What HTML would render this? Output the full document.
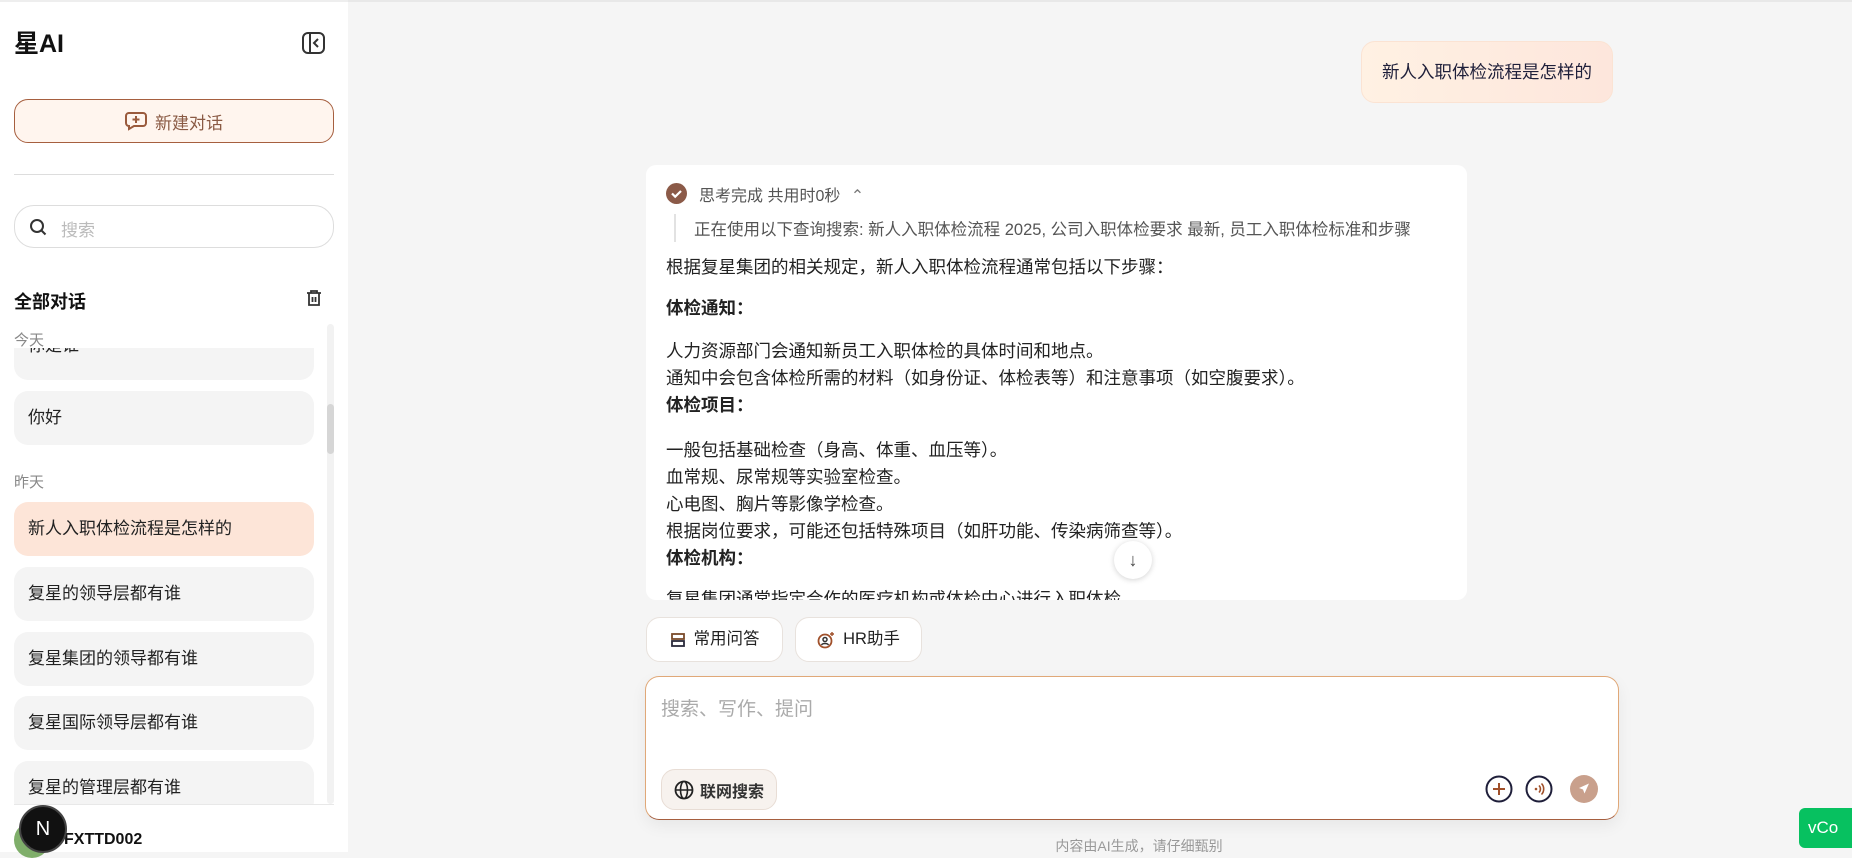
<!DOCTYPE html>
<html><head><meta charset="utf-8"><style>
*{box-sizing:border-box;margin:0;padding:0}
body{width:1852px;height:852px;overflow:hidden;background:#f5f5f5;font-family:"Liberation Sans","Noto Sans CJK SC",sans-serif;color:#1f1f1f;position:relative}
.abs{position:absolute}
#side{left:0;top:0;width:348px;height:852px;background:#fff;border-top:2px solid #eee}
.item{position:absolute;left:14px;width:300px;height:54px;border-radius:14px;background:#f4f4f4;font-size:17px;line-height:54px;padding-left:14px;color:#222}
.body p{font-size:17.5px;line-height:27px;color:#222}
.chip{position:absolute;top:617px;height:45px;background:#fff;border:1px solid #e8e2dd;border-radius:14px;font-size:16.5px;line-height:43px;display:flex;align-items:center;justify-content:center;gap:8px;color:#222}
</style></head><body>
<div class="abs" style="left:0;top:0;width:1852px;height:2px;background:#e8e8e8"></div>
<div id="side" class="abs">
  <div class="abs" style="left:14px;top:22px;font-size:25px;font-weight:bold;color:#111">星AI</div>
  <svg class="abs" style="left:301px;top:29px" width="25" height="24" viewBox="0 0 25 24"><rect x="2" y="2" width="21" height="20" rx="5" fill="none" stroke="#333" stroke-width="2"/><line x1="9" y1="2" x2="9" y2="22" stroke="#333" stroke-width="2"/><path d="M17 8l-4 4 4 4" fill="none" stroke="#333" stroke-width="2"/></svg>
  <div class="abs" style="left:14px;top:97px;width:320px;height:44px;border:1px solid #a65f3f;border-radius:14px;background:#fff5ee;display:flex;align-items:center;justify-content:center;gap:8px;font-size:17px;color:#8a5a44">
    <svg width="22" height="20" viewBox="0 0 22 20"><path d="M4 2h14a3 3 0 013 3v7a3 3 0 01-3 3H9l-5 3v-3a3 3 0 01-3-3V5a3 3 0 013-3z" fill="none" stroke="#9a5a3c" stroke-width="2"/><path d="M11 5v7M7.5 8.5h7" stroke="#9a5a3c" stroke-width="2"/></svg>新建对话</div>
  <div class="abs" style="left:14px;top:172px;width:320px;height:1px;background:#ddd"></div>
  <div class="abs" style="left:14px;top:203px;width:320px;height:43px;border:1px solid #ddd;border-radius:20px">
    <svg class="abs" style="left:14px;top:12px" width="18" height="18" viewBox="0 0 18 18"><circle cx="8" cy="8" r="6" fill="none" stroke="#333" stroke-width="2"/><path d="M12.5 12.5l4 4" stroke="#333" stroke-width="2"/></svg>
    <span class="abs" style="left:46px;top:10px;font-size:17px;color:#bbb">搜索</span></div>
  <div class="abs" style="left:14px;top:286px;font-size:18px;font-weight:bold;color:#111">全部对话</div>
  <svg class="abs" style="left:305px;top:287px" width="18" height="18" viewBox="0 0 18 18"><path d="M2 4h14M6 4V2h6v2M4 4v12h10V4M7.5 8v5M10.5 8v5" fill="none" stroke="#333" stroke-width="1.8"/></svg>
  <div class="abs" style="left:0;top:322px;width:348px;height:480px;overflow:hidden">
    <div class="item" style="top:2px;line-height:40px">你是谁</div>
    <div class="abs" style="left:0;top:0;width:326px;height:24px;background:#fff"></div>
    <div class="abs" style="left:14px;top:5px;font-size:15px;color:#888">今天</div>
    <div class="item" style="top:67px">你好</div>
    <div class="abs" style="left:14px;top:147px;font-size:15px;color:#888">昨天</div>
    <div class="item" style="top:178px;background:#fde5d8">新人入职体检流程是怎样的</div>
    <div class="item" style="top:243px">复星的领导层都有谁</div>
    <div class="item" style="top:308px">复星集团的领导都有谁</div>
    <div class="item" style="top:372px">复星国际领导层都有谁</div>
    <div class="item" style="top:437px">复星的管理层都有谁</div>
    <div class="abs" style="left:327px;top:0;width:7px;height:480px;background:#f2f2f2;border-radius:4px"></div>
    <div class="abs" style="left:327px;top:80px;width:7px;height:50px;background:#d6d6d6;border-radius:4px"></div>
  </div>
  <div class="abs" style="left:14px;top:802px;width:320px;height:1px;background:#e8e8e8"></div>
  <div class="abs" style="left:14px;top:820px;width:36px;height:36px;border-radius:50%;background:#7fae6a"></div>
  <div class="abs" style="left:64px;top:829px;font-size:16px;font-weight:bold;color:#111">FXTTD002</div>
  <div class="abs" style="left:19px;top:803px;width:48px;height:48px;border-radius:50%;background:#111;border:2px solid #444;color:#fff;font-size:20px;text-align:center;line-height:44px">N</div>
</div>

<div class="abs" style="left:1361px;top:41px;width:252px;height:62px;border-radius:14px;background:linear-gradient(90deg,#fff1e3,#fde6dc);border:1px solid #fbe3d3;font-size:17.5px;line-height:60px;text-align:center;color:#1f1f3a">新人入职体检流程是怎样的</div>

<div class="abs" style="left:646px;top:165px;width:821px;height:435px;background:#fff;border-radius:10px;overflow:hidden">
  <svg class="abs" style="left:20px;top:18px" width="21" height="21" viewBox="0 0 21 21"><circle cx="10.5" cy="10.5" r="10.5" fill="#8b5a48"/><path d="M6 10.5l3.2 3.2L15 8" fill="none" stroke="#fff" stroke-width="2.2"/></svg>
  <div class="abs" style="left:53px;top:17px;font-size:16px;color:#555">思考完成 共用时0秒 <span style="margin-left:6px;color:#777">⌃</span></div>
  <div class="abs" style="left:28px;top:49px;width:2px;height:28px;background:#e2e2e2"></div>
  <div class="abs" style="left:48px;top:51px;font-size:16.5px;color:#555;white-space:nowrap">正在使用以下查询搜索: 新人入职体检流程 2025, 公司入职体检要求 最新, 员工入职体检标准和步骤</div>
  <div class="abs body" style="left:20px;top:89px;width:790px">
    <p>根据复星集团的相关规定，新人入职体检流程通常包括以下步骤：</p>
    <p style="margin-top:14px;font-weight:bold">体检通知：</p>
    <p style="margin-top:16px">人力资源部门会通知新员工入职体检的具体时间和地点。</p>
    <p>通知中会包含体检所需的材料（如身份证、体检表等）和注意事项（如空腹要求）。</p>
    <p style="font-weight:bold">体检项目：</p>
    <p style="margin-top:18px">一般包括基础检查（身高、体重、血压等）。</p>
    <p>血常规、尿常规等实验室检查。</p>
    <p>心电图、胸片等影像学检查。</p>
    <p>根据岗位要求，可能还包括特殊项目（如肝功能、传染病筛查等）。</p>
    <p style="font-weight:bold">体检机构：</p>
    <p style="margin-top:14px">复星集团通常指定合作的医疗机构或体检中心进行入职体检。</p>
  </div>
</div>
<div class="abs" style="left:1114px;top:541px;width:38px;height:38px;border-radius:50%;background:#fff;box-shadow:0 1px 6px rgba(0,0,0,.18);text-align:center;line-height:38px;font-size:18px;color:#444">↓</div>

<div class="chip" style="left:646px;width:137px"><svg width="16" height="16" viewBox="0 0 16 16"><rect x="2" y="2" width="12" height="5" fill="none" stroke="#7a4a2a" stroke-width="1.8"/><rect x="2" y="9" width="12" height="5" fill="none" stroke="#2a2a3a" stroke-width="1.8"/></svg>常用问答</div>
<div class="chip" style="left:795px;width:127px"><svg width="18" height="18" viewBox="0 0 18 18"><circle cx="8" cy="10" r="6.5" fill="none" stroke="#a0502a" stroke-width="1.8"/><circle cx="8" cy="8.5" r="2" fill="none" stroke="#333" stroke-width="1.5"/><path d="M4.5 14c1-2 6-2 7 0" fill="none" stroke="#333" stroke-width="1.5"/><path d="M15 1v4M13 3h4" stroke="#a0502a" stroke-width="1.4"/></svg>HR助手</div>

<div class="abs" style="left:645px;top:676px;width:974px;height:144px;border-radius:14px;background:#fff;border:1px solid #e0a878;border-bottom-color:#a65f3f;box-shadow:0 6px 16px rgba(0,0,0,.06)">
  <div class="abs" style="left:15px;top:17px;font-size:19px;color:#aaa">搜索、写作、提问</div>
  <div class="abs" style="left:15px;top:92px;width:116px;height:41px;border-radius:14px;background:#f7f2ee;border:1px solid #e8ddd5;display:flex;align-items:center;justify-content:center;gap:6px;font-size:16px;font-weight:bold;color:#333">
    <svg width="20" height="20" viewBox="0 0 20 20"><circle cx="10" cy="10" r="8.5" fill="none" stroke="#222" stroke-width="1.8"/><ellipse cx="10" cy="10" rx="3.5" ry="8.5" fill="none" stroke="#222" stroke-width="1.6"/><path d="M1.5 10h17" stroke="#222" stroke-width="1.6"/></svg>联网搜索</div>
  <svg class="abs" style="left:839px;top:98px" width="28" height="28" viewBox="0 0 28 28"><circle cx="14" cy="14" r="12.5" fill="none" stroke="#1f1f3a" stroke-width="2"/><path d="M14 8v12M8 14h12" stroke="#a0502a" stroke-width="2"/></svg>
  <svg class="abs" style="left:879px;top:98px" width="28" height="28" viewBox="0 0 28 28"><circle cx="14" cy="14" r="12.5" fill="none" stroke="#1f1f3a" stroke-width="2"/><circle cx="11" cy="14" r="1.3" fill="#a0502a"/><path d="M14 10.5a5 5 0 010 7M16.5 8.5a8 8 0 010 11" fill="none" stroke="#a0502a" stroke-width="1.6"/></svg>
  <div class="abs" style="left:924px;top:98px;width:28px;height:28px;border-radius:50%;background:#c9a08c"><svg width="28" height="28" viewBox="0 0 28 28"><path d="M19 8.5L9 13l4 1.5 1.5 4z" fill="#fff"/></svg></div>
</div>
<div class="abs" style="left:1039px;top:836px;width:200px;text-align:center;font-size:14px;color:#999">内容由AI生成，请仔细甄别</div>
<div class="abs" style="left:1799px;top:808px;width:60px;height:40px;border-radius:6px;background:#07c160;color:#fff;font-size:17px;line-height:40px;padding-left:9px">vCo</div>
</body></html>
